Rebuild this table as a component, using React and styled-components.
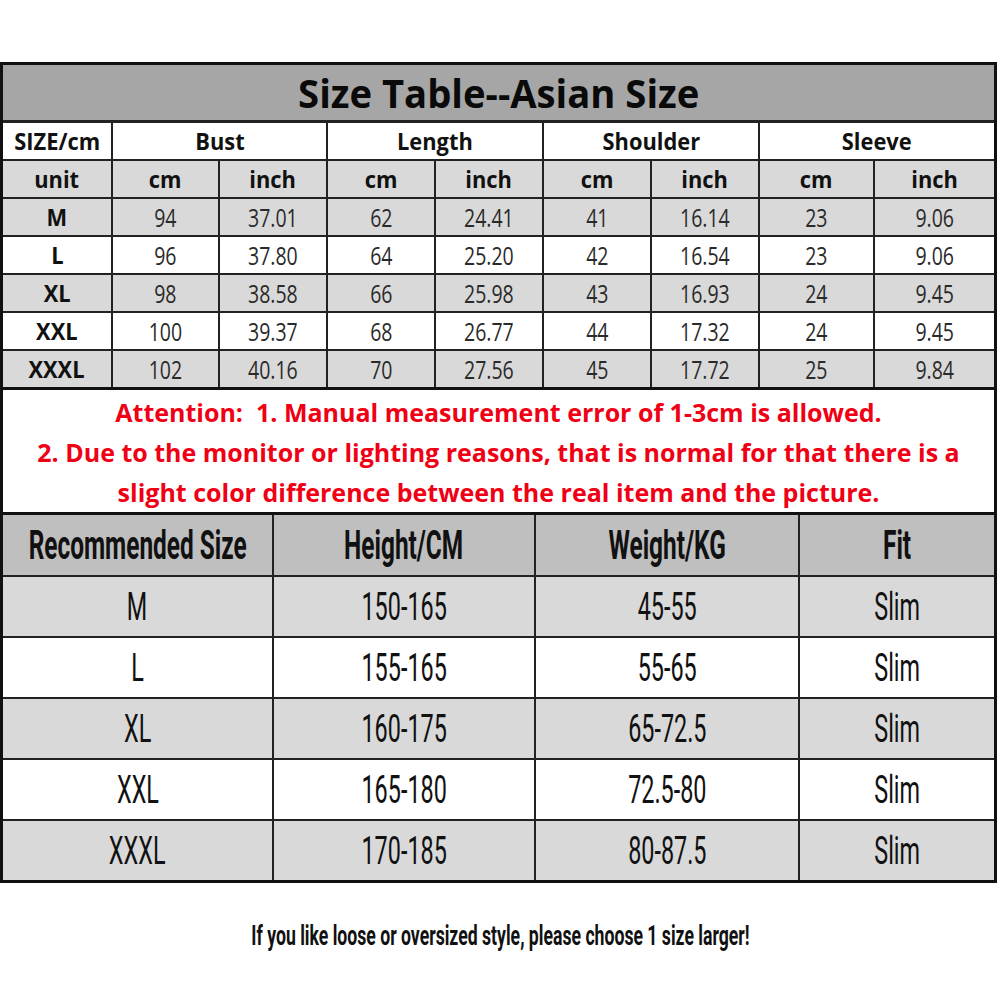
import React from 'react';
import styled, { createGlobalStyle } from 'styled-components';

const sizeRows = [
  ['M', '94', '37.01', '62', '24.41', '41', '16.14', '23', '9.06'],
  ['L', '96', '37.80', '64', '25.20', '42', '16.54', '23', '9.06'],
  ['XL', '98', '38.58', '66', '25.98', '43', '16.93', '24', '9.45'],
  ['XXL', '100', '39.37', '68', '26.77', '44', '17.32', '24', '9.45'],
  ['XXXL', '102', '40.16', '70', '27.56', '45', '17.72', '25', '9.84'],
];

const groups = ['Bust', 'Length', 'Shoulder', 'Sleeve'];

const recommendRows = [
  ['M', '150-165', '45-55', 'Slim'],
  ['L', '155-165', '55-65', 'Slim'],
  ['XL', '160-175', '65-72.5', 'Slim'],
  ['XXL', '165-180', '72.5-80', 'Slim'],
  ['XXXL', '170-185', '80-87.5', 'Slim'],
];

const notes = [
  'Attention:  1. Manual measurement error of 1-3cm is allowed.',
  '2. Due to the monitor or lighting reasons, that is normal for that there is a',
  'slight color difference between the real item and the picture.',
];

const App = () => {
  return (
    <>
      <GlobalStyle />
      <Page>
        <Sheet>
          <SizeGrid>
            <TitleCell>
              <TitleText>Size Table--Asian Size</TitleText>
            </TitleCell>

            <Cell $bg="#fff">
              <HeadText>SIZE/cm</HeadText>
            </Cell>
            {groups.map(group => (
              <Cell key={group} $bg="#fff" $span={2}>
                <HeadText>{group}</HeadText>
              </Cell>
            ))}

            <Cell $bg="#d9d9d9">
              <HeadText>unit</HeadText>
            </Cell>
            {groups.map(group => (
              <React.Fragment key={group}>
                <Cell $bg="#d9d9d9">
                  <HeadText>cm</HeadText>
                </Cell>
                <Cell $bg="#d9d9d9">
                  <HeadText>inch</HeadText>
                </Cell>
              </React.Fragment>
            ))}

            {sizeRows.map((row, rowIndex) =>
              row.map((value, index) => (
                <Cell
                  key={`${rowIndex}-${index}`}
                  $bg={rowIndex % 2 === 0 ? '#d9d9d9' : '#fff'}
                >
                  {index === 0 ? (
                    <HeadText>{value}</HeadText>
                  ) : (
                    <NumText>{value}</NumText>
                  )}
                </Cell>
              ))
            )}
          </SizeGrid>

          <Attention>
            {notes.map(note => (
              <NoteLine key={note}>
                <NoteText>{note}</NoteText>
              </NoteLine>
            ))}
          </Attention>

          <RecommendGrid>
            {['Recommended Size', 'Height/CM', 'Weight/KG', 'Fit'].map(head => (
              <BigCell key={head} $bg="#bfbfbf">
                <BigHead>{head}</BigHead>
              </BigCell>
            ))}
            {recommendRows.map((row, rowIndex) =>
              row.map((value, index) => (
                <BigCell
                  key={`${rowIndex}-${index}`}
                  $bg={rowIndex % 2 === 0 ? '#d9d9d9' : '#fff'}
                >
                  <BigValue>{value}</BigValue>
                </BigCell>
              ))
            )}
          </RecommendGrid>
        </Sheet>

        <Footer>
          <FooterText>
            If you like loose or oversized style, please choose 1 size larger!
          </FooterText>
        </Footer>
      </Page>
    </>
  );
};

export default App;

const GlobalStyle = createGlobalStyle`
  html, body {
    margin: 0;
    padding: 0;
    background: #fff;
  }
  * {
    box-sizing: border-box;
  }
`;

const Page = styled.div`
  width: 1000px;
  height: 1000px;
  padding-top: 62px;
  background: #fff;
  overflow: hidden;
`;

const Sheet = styled.div`
  width: 997px;
  border: 3px solid #111;
  background: #fff;
`;

const SizeGrid = styled.div`
  display: grid;
  grid-template-columns: 108px 105px 106px 106px 106px 106px 106px 113px 119px;
  grid-template-rows: 56px repeat(7, 36px);
  gap: 2px;
  background: #222;
`;

const TitleCell = styled.div`
  grid-column: 1 / -1;
  display: flex;
  align-items: center;
  justify-content: center;
  background: #a6a6a6;
  border-bottom: 1px solid #222;
`;

const TitleText = styled.span`
  display: inline-block;
  white-space: nowrap;
  font-family: 'Open Sans', 'Liberation Sans', sans-serif;
  font-weight: 700;
  font-size: 39px;
  color: #0a0a0a;
  transform: scaleX(0.98);
`;

const Cell = styled.div`
  grid-column: span ${props => props.$span || 1};
  display: flex;
  align-items: center;
  justify-content: center;
  background: ${props => props.$bg};
`;

const HeadText = styled.span`
  display: inline-block;
  white-space: nowrap;
  font-family: 'Open Sans', 'Liberation Sans', sans-serif;
  font-weight: 700;
  font-size: 23px;
  color: #111;
  transform: scaleX(0.95);
`;

const NumText = styled.span`
  display: inline-block;
  white-space: nowrap;
  font-family: 'Open Sans', 'Liberation Sans', sans-serif;
  font-weight: 400;
  font-size: 25px;
  color: #2a2a2a;
  transform: scaleX(0.78);
`;

const Attention = styled.div`
  height: 128px;
  border-top: 3px solid #111;
  border-bottom: 3px solid #111;
  padding-top: 2px;
  display: flex;
  flex-direction: column;
  align-items: center;
  justify-content: center;
`;

const NoteLine = styled.div`
  height: 40px;
  display: flex;
  align-items: center;
  justify-content: center;
  width: 100%;
`;

const NoteText = styled.span`
  display: inline-block;
  white-space: pre;
  font-family: 'Open Sans', 'Liberation Sans', sans-serif;
  font-weight: 700;
  font-size: 25px;
  color: #f00014;
`;

const RecommendGrid = styled.div`
  display: grid;
  grid-template-columns: 269px 260px 262px 194px;
  grid-template-rows: 60px repeat(5, 59px);
  gap: 2px;
  background: #222;
`;

const BigCell = styled.div`
  display: flex;
  align-items: center;
  justify-content: center;
  background: ${props => props.$bg};
`;

const BigHead = styled.span`
  display: inline-block;
  white-space: nowrap;
  font-family: Roboto, 'Liberation Sans', sans-serif;
  font-weight: 700;
  font-size: 40px;
  color: #111;
  transform: scaleX(0.61);
`;

const BigValue = styled.span`
  display: inline-block;
  white-space: nowrap;
  font-family: Roboto, 'Liberation Sans', sans-serif;
  font-weight: 400;
  font-size: 39px;
  color: #111;
  transform: scaleX(0.6);
`;

const Footer = styled.div`
  margin-top: 32px;
  height: 40px;
  display: flex;
  align-items: center;
  justify-content: center;
`;

const FooterText = styled.span`
  display: inline-block;
  white-space: nowrap;
  font-family: Roboto, 'Liberation Sans', sans-serif;
  font-weight: 700;
  font-size: 28px;
  color: #111;
  transform: scaleX(0.63);
`;
